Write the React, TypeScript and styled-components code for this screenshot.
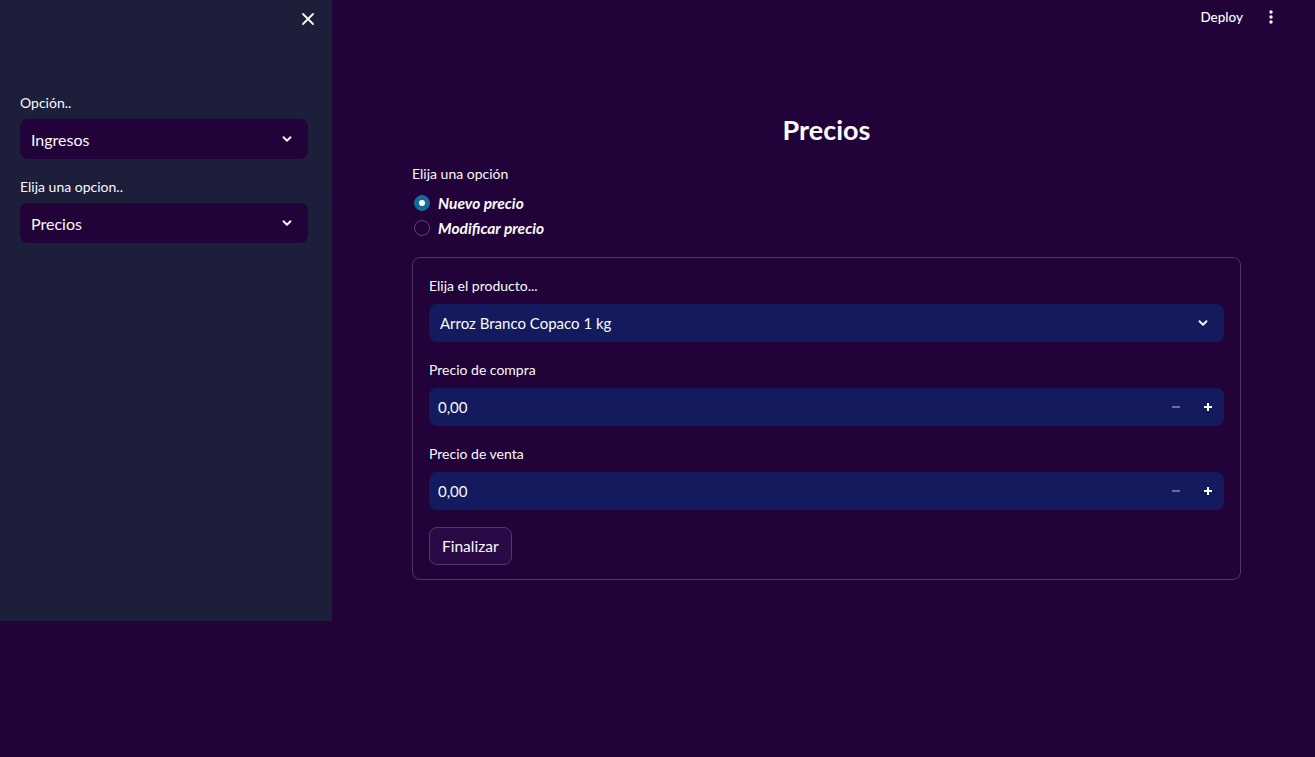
import React, { useState } from "react";
import styled, { createGlobalStyle } from "styled-components";

const Global = createGlobalStyle`
  html, body { margin: 0; padding: 0; background: #21033a; }
  body { font-family: Lato, "Noto Sans", sans-serif; color: #fafafa; }
  * { box-sizing: border-box; }
`;

const Page = styled.div`
  display: flex;
  align-items: flex-start;
  width: 1315px;
  height: 757px;
  background: #21033a;
  overflow: hidden;
`;

const Sidebar = styled.aside`
  width: 332px;
  height: 621px;
  flex: none;
  background: #1d1e39;
  display: flex;
  flex-direction: column;
  padding: 0 24px 0 20px;
`;

const SidebarTop = styled.div`
  height: 93px;
  display: flex;
  justify-content: flex-end;
  padding-top: 9px;
  margin-right: -10px;
`;

const IconButton = styled.button`
  width: 20px;
  height: 20px;
  padding: 0;
  border: none;
  background: transparent;
  color: #fafafa;
  display: flex;
  align-items: center;
  justify-content: center;
  cursor: pointer;
`;

const Field = styled.div`
  display: flex;
  flex-direction: column;
  margin-bottom: 18px;
`;

const Label = styled.label<{ $mb?: number }>`
  font-size: 14px;
  line-height: 20px;
  height: 20px;
  margin-bottom: ${(p) => p.$mb ?? 6}px;
  color: #fafafa;
`;

const SelectBox = styled.div<{ $bg: string; $size?: number; $h?: number }>`
  height: ${(p) => p.$h ?? 40}px;
  border-radius: 8px;
  background: ${(p) => p.$bg};
  display: flex;
  align-items: center;
  justify-content: space-between;
  padding: 0 14px 0 11px;
  font-size: ${(p) => p.$size ?? 16}px;
`;

const Main = styled.main`
  flex: 1;
  display: flex;
  flex-direction: column;
  height: 757px;
`;

const Header = styled.header`
  height: 34px;
  display: flex;
  justify-content: flex-end;
  align-items: center;
  gap: 18px;
  padding-right: 34px;
`;

const HeaderText = styled.span`
  font-size: 13.5px;
  font-weight: 500;
  color: #fafafa;
`;

const Content = styled.div`
  width: 829px;
  margin-left: 80px;
  display: flex;
  flex-direction: column;
  padding-top: 76px;
`;

const Title = styled.h1`
  margin: 0 0 14px 0;
  text-align: center;
  font-size: 27px;
  font-weight: 700;
  line-height: 40px;
`;

const RadioGroup = styled.div`
  display: flex;
  flex-direction: column;
  gap: 5px;
  margin-top: 3px;
  margin-bottom: 19px;
`;

const RadioRow = styled.div`
  display: flex;
  align-items: center;
  gap: 8px;
  height: 20px;
  padding-left: 2px;
  font-size: 15.5px;
  font-weight: 700;
  font-style: italic;
`;

const RadioDot = styled.span<{ $on: boolean }>`
  width: 16px;
  height: 16px;
  border-radius: 50%;
  flex: none;
  background: ${(p) => (p.$on ? "#17699a" : "transparent")};
  border: 1px solid ${(p) => (p.$on ? "#17699a" : "#5b4678")};
  display: flex;
  align-items: center;
  justify-content: center;
  &::after {
    content: "";
    width: 6px;
    height: 6px;
    border-radius: 50%;
    background: #fff;
    display: ${(p) => (p.$on ? "block" : "none")};
  }
`;

const Card = styled.div`
  border: 1px solid #4c3868;
  border-radius: 8px;
  padding: 18px 16px 14px 16px;
  display: flex;
  flex-direction: column;
`;

const NumberBox = styled.div`
  height: 38px;
  border-radius: 8px;
  background: #131b5e;
  display: flex;
  align-items: center;
  padding: 0 0 0 9px;
  font-size: 15px;
`;

const NumberValue = styled.span`
  flex: 1;
`;

const Stepper = styled.span<{ $muted?: boolean }>`
  width: 32px;
  height: 38px;
  display: flex;
  align-items: center;
  justify-content: center;
  color: ${(p) => (p.$muted ? "#7d82a8" : "#ffffff")};
`;

const Button = styled.button`
  align-self: flex-start;
  height: 38px;
  padding: 0 12px;
  border-radius: 8px;
  border: 1px solid #4f3a6d;
  background: #2a0a46;
  color: #fafafa;
  font-family: inherit;
  font-size: 15.5px;
  margin-top: -1px;
`;

const Chevron = () => (
  <svg width="14" height="14" viewBox="0 0 24 24" fill="none" stroke="#fafafa" strokeWidth="3.2" strokeLinecap="round" strokeLinejoin="round">
    <path d="M6 9l6 6 6-6" />
  </svg>
);

const Close = () => (
  <svg width="14" height="14" viewBox="0 0 14 14" stroke="#fafafa" strokeWidth="1.8" strokeLinecap="round">
    <path d="M2 2l10 10M12 2L2 12" />
  </svg>
);

const Kebab = () => (
  <svg width="4" height="16" viewBox="0 0 4 16" fill="#fafafa">
    <circle cx="2" cy="3" r="1.7" />
    <circle cx="2" cy="8" r="1.7" />
    <circle cx="2" cy="13" r="1.7" />
  </svg>
);

const Minus = () => (
  <svg width="10" height="10" viewBox="0 0 10 10" stroke="currentColor" strokeWidth="1.6">
    <path d="M1 5h8" />
  </svg>
);

const Plus = () => (
  <svg width="10" height="10" viewBox="0 0 10 10" stroke="currentColor" strokeWidth="2">
    <path d="M1 5h8M5 1v8" />
  </svg>
);

const NumberInput = ({ value }: { value: string }) => (
  <NumberBox>
    <NumberValue>{value}</NumberValue>
    <Stepper $muted>
      <Minus />
    </Stepper>
    <Stepper>
      <Plus />
    </Stepper>
  </NumberBox>
);

export default function App() {
  const [choice] = useState(0);
  return (
    <>
      <Global />
      <Page>
        <Sidebar>
          <SidebarTop>
            <IconButton>
              <Close />
            </IconButton>
          </SidebarTop>
          <Field>
            <Label>Opción..</Label>
            <SelectBox $bg="#21033a">
              <span>Ingresos</span>
              <Chevron />
            </SelectBox>
          </Field>
          <Field>
            <Label>Elija una opcion..</Label>
            <SelectBox $bg="#21033a">
              <span>Precios</span>
              <Chevron />
            </SelectBox>
          </Field>
        </Sidebar>
        <Main>
          <Header>
            <HeaderText>Deploy</HeaderText>
            <IconButton>
              <Kebab />
            </IconButton>
          </Header>
          <Content>
            <Title>Precios</Title>
            <Label>Elija una opción</Label>
            <RadioGroup>
              {["Nuevo precio", "Modificar precio"].map((t, i) => (
                <RadioRow key={t}>
                  <RadioDot $on={choice === i} />
                  {t}
                </RadioRow>
              ))}
            </RadioGroup>
            <Card>
              <Field>
                <Label $mb={8}>Elija el producto...</Label>
                <SelectBox $bg="#131b5e" $size={15} $h={38}>
                  <span>Arroz Branco Copaco 1 kg</span>
                  <Chevron />
                </SelectBox>
              </Field>
              <Field>
                <Label $mb={8}>Precio de compra</Label>
                <NumberInput value="0,00" />
              </Field>
              <Field>
                <Label $mb={8}>Precio de venta</Label>
                <NumberInput value="0,00" />
              </Field>
              <Button>Finalizar</Button>
            </Card>
          </Content>
        </Main>
      </Page>
    </>
  );
}
